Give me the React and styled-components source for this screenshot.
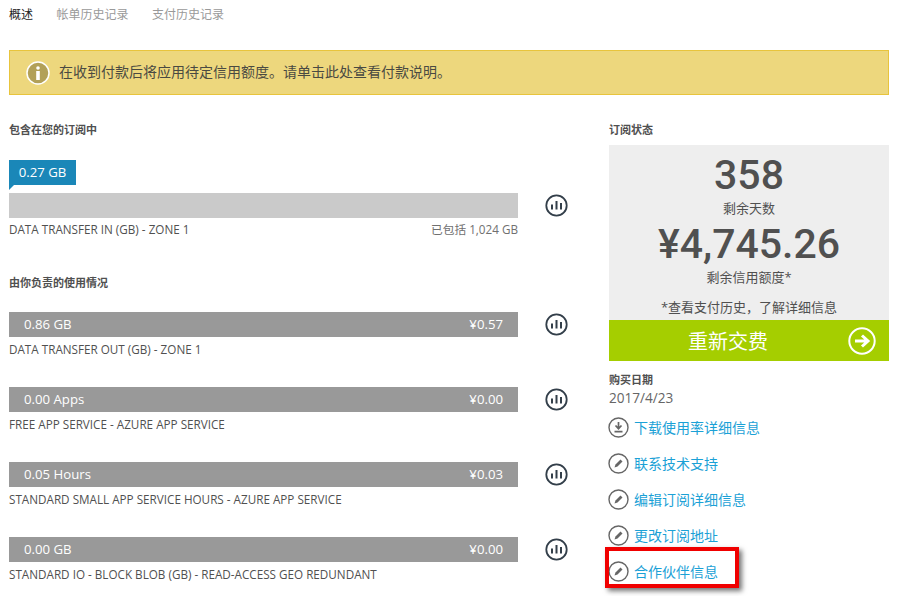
import styled, { createGlobalStyle } from 'styled-components';

const GlobalStyle = createGlobalStyle`
	html, body {
		margin: 0;
		padding: 0;
		background: #fff;
		overflow: hidden;
	}
	body {
		font-family: "Open Sans", "Noto Sans CJK SC", sans-serif;
		color: #505050;
	}
`;

const Page = styled.div`
	position: relative;
	width: 920px;
	height: 596px;
	padding: 0 31px 0 9px;
	box-sizing: border-box;
	overflow: hidden;
`;

const Tabs = styled.div`
	display: flex;
	gap: 23.5px;
	height: 50px;
	padding-top: 6px;
	box-sizing: border-box;
	font-size: 12px;
	line-height: 17px;
`;

const Tab = styled.div`
	color: ${(p) => (p.$active ? '#222' : '#999')};
`;

const Alert = styled.div`
	display: flex;
	align-items: center;
	gap: 9px;
	height: 45px;
	padding-left: 16px;
	box-sizing: border-box;
	background: #edd77d;
	border: 1px solid #e8c43c;
	font-size: 14px;
	color: #4a4a42;
`;

const AlertText = styled.div`
	padding-bottom: 3px;
`;

const Columns = styled.div`
	display: flex;
	justify-content: space-between;
	padding-top: 27px;
`;

const LeftColumn = styled.div`
	width: 560px;
`;

const RightColumn = styled.div`
	width: 280px;
`;

const Heading = styled.div`
	font-size: 11px;
	font-weight: 700;
	line-height: 15px;
	color: #505050;
	margin-bottom: ${(p) => p.$gap || 0}px;
`;

const Tag = styled.div`
	position: relative;
	width: 67px;
	height: 25px;
	margin-bottom: 8px;
	background: #1a87b8;
	color: #fff;
	font-size: 13.2px;
	line-height: 24px;
	text-align: center;

	&::after {
		content: '';
		position: absolute;
		left: 0;
		top: 25px;
		border-top: 5px solid #1a87b8;
		border-right: 5px solid transparent;
	}
`;

const MeterRow = styled.div`
	display: flex;
	align-items: center;
	gap: 27px;
`;

const Bar = styled.div`
	display: flex;
	justify-content: space-between;
	align-items: center;
	width: 509px;
	height: 25px;
	padding: 0 15px 2px;
	box-sizing: border-box;
	background: ${(p) => (p.$light ? '#cacaca' : '#999')};
	color: #fff;
	font-size: 13.2px;
`;

const Meter = styled.div`
	margin-bottom: ${(p) => p.$gap}px;
`;

const LabelRow = styled.div`
	display: flex;
	justify-content: space-between;
	width: 509px;
	margin-top: ${(p) => p.$top}px;
	font-size: 11.7px;
	line-height: 15px;
	color: #505050;
`;

const Included = styled.span`
	color: #707070;
`;

const StatusBox = styled.div`
	display: flex;
	flex-direction: column;
	align-items: center;
	height: 175px;
	background: #eee;
	box-sizing: border-box;
	padding-top: 7px;
`;

const BigNumber = styled.div`
	font-family: Roboto, "Open Sans", sans-serif;
	font-size: 41px;
	font-weight: 500;
	line-height: 46px;
	color: #505050;
`;

const StatusLabel = styled.div`
	font-size: 13px;
	line-height: 16px;
	margin-top: ${(p) => p.$top || 0}px;
	margin-bottom: ${(p) => p.$gap || 0}px;
	color: #505050;
`;

const RenewButton = styled.div`
	display: flex;
	align-items: center;
	justify-content: space-between;
	height: 41px;
	padding: 0 13px 0 79px;
	background: #a5ce00;
	color: #fff;
	font-size: 20px;
`;

const DateLabel = styled.div`
	margin-top: 11px;
	font-size: 11px;
	font-weight: 700;
	line-height: 15px;
`;

const DateValue = styled.div`
	font-size: 13.6px;
	line-height: 21px;
	color: #666;
`;

const LinkList = styled.div`
	display: flex;
	flex-direction: column;
	gap: 12px;
	margin: 7px 0 0 -1px;
`;

const LinkRow = styled.div`
	display: flex;
	align-items: center;
	gap: 5px;
	height: 24px;
	color: #1ba1d6;
	font-size: 14px;
`;

const Highlight = styled.div`
	position: absolute;
	left: 605px;
	top: 547px;
	width: 134px;
	height: 41px;
	box-sizing: border-box;
	border: 4px solid #f00000;
	box-shadow: 3px 3px 5px rgba(0, 0, 0, 0.55);
`;

const InfoIcon = () => (
	<svg width="24" height="24" viewBox="0 0 24 24">
		<circle cx="12" cy="12" r="11" fill="#b2a058" stroke="#fff" strokeWidth="1.5" />
		<circle cx="12" cy="7" r="1.8" fill="#fff" />
		<rect x="10.2" y="10" width="3.6" height="9" fill="#fff" />
	</svg>
);

const ChartIcon = () => (
	<svg width="23" height="23" viewBox="0 0 23 23" fill="none">
		<circle cx="11.5" cy="11.5" r="10.2" stroke="#333f4a" strokeWidth="1.8" />
		<path d="M7 10.5v5M11.5 7v8.5M16 9v6.5" stroke="#333f4a" strokeWidth="2" />
	</svg>
);

const ArrowIcon = () => (
	<svg width="28" height="28" viewBox="0 0 28 28" fill="none">
		<circle cx="14" cy="14" r="12.7" stroke="#fff" strokeWidth="2" />
		<path d="M7 14h12M14 8.5l6 5.5-6 5.5" stroke="#fff" strokeWidth="3" />
	</svg>
);

const DownloadIcon = () => (
	<svg width="21" height="21" viewBox="0 0 21 21" fill="none">
		<circle cx="10.5" cy="10.5" r="9.5" stroke="#666" strokeWidth="1.4" />
		<path d="M10.5 5v6.5M7.5 8.5l3 3.2 3-3.2M6.5 14.7h8" stroke="#666" strokeWidth="1.7" />
	</svg>
);

const PencilIcon = () => (
	<svg width="21" height="21" viewBox="0 0 21 21" fill="none">
		<circle cx="10.5" cy="10.5" r="9.5" stroke="#666" strokeWidth="1.4" />
		<path d="M6.5 14.5l1-3 5-5 2 2-5 5z" fill="#666" />
	</svg>
);

const usage = [
	{ amount: '0.86 GB', cost: '¥0.57', name: 'DATA TRANSFER OUT (GB) - ZONE 1' },
	{ amount: '0.00 Apps', cost: '¥0.00', name: 'FREE APP SERVICE - AZURE APP SERVICE' },
	{ amount: '0.05 Hours', cost: '¥0.03', name: 'STANDARD SMALL APP SERVICE HOURS - AZURE APP SERVICE' },
	{ amount: '0.00 GB', cost: '¥0.00', name: 'STANDARD IO - BLOCK BLOB (GB) - READ-ACCESS GEO REDUNDANT' },
];

const links = [
	{ text: '下载使用率详细信息', icon: <DownloadIcon /> },
	{ text: '联系技术支持', icon: <PencilIcon /> },
	{ text: '编辑订阅详细信息', icon: <PencilIcon /> },
	{ text: '更改订阅地址', icon: <PencilIcon /> },
	{ text: '合作伙伴信息', icon: <PencilIcon /> },
];

const App = () => {
	return (
		<Page>
			<GlobalStyle />
			<Tabs>
				<Tab $active>概述</Tab>
				<Tab>帐单历史记录</Tab>
				<Tab>支付历史记录</Tab>
			</Tabs>
			<Alert>
				<InfoIcon />
				<AlertText>在收到付款后将应用待定信用额度。请单击此处查看付款说明。</AlertText>
			</Alert>
			<Columns>
				<LeftColumn>
					<Heading $gap={23}>包含在您的订阅中</Heading>
					<Meter $gap={38}>
						<Tag>0.27 GB</Tag>
						<MeterRow>
							<Bar $light />
							<ChartIcon />
						</MeterRow>
						<LabelRow $top={4}>
							<span>DATA TRANSFER IN (GB) - ZONE 1</span>
							<Included>已包括 1,024 GB</Included>
						</LabelRow>
					</Meter>
					<Heading $gap={22}>由你负责的使用情况</Heading>
					{usage.map((row) => (
						<Meter key={row.name} $gap={30}>
							<MeterRow>
								<Bar>
									<span>{row.amount}</span>
									<span>{row.cost}</span>
								</Bar>
								<ChartIcon />
							</MeterRow>
							<LabelRow $top={5}>
								<span>{row.name}</span>
							</LabelRow>
						</Meter>
					))}
				</LeftColumn>
				<RightColumn>
					<Heading $gap={8}>订阅状态</Heading>
					<StatusBox>
						<BigNumber>358</BigNumber>
						<StatusLabel $top={2} $gap={5}>剩余天数</StatusLabel>
						<BigNumber>¥4,745.26</BigNumber>
						<StatusLabel $top={2} $gap={14}>剩余信用额度*</StatusLabel>
						<StatusLabel>*查看支付历史，了解详细信息</StatusLabel>
					</StatusBox>
					<RenewButton>
						<span>重新交费</span>
						<ArrowIcon />
					</RenewButton>
					<DateLabel>购买日期</DateLabel>
					<DateValue>2017/4/23</DateValue>
					<LinkList>
						{links.map((link) => (
							<LinkRow key={link.text}>
								{link.icon}
								<span>{link.text}</span>
							</LinkRow>
						))}
					</LinkList>
				</RightColumn>
			</Columns>
			<Highlight />
		</Page>
	);
};

export default App;
